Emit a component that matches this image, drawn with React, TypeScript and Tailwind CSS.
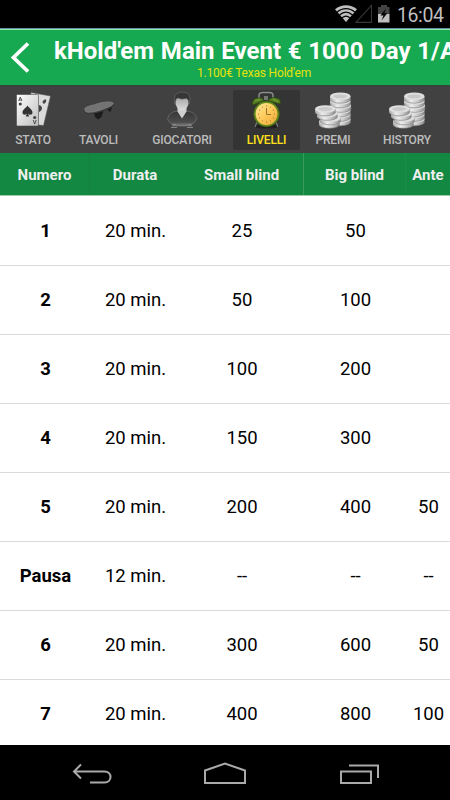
import React from "react";

function StatusIcons() {
  return (
    <svg width="56" height="28" viewBox="334 0 56 28" className="shrink-0">
      <path d="M335 9.2C341.500 3.800 350.500 3.800 357 9.200L346 22Z" fill="#bfbfbf" />
      <g fill="none" stroke="#000" strokeWidth="1.100">
        <path d="M337 12.200C342.500 7.400 349.500 7.400 355 12.200" />
        <path d="M339.500 15C343.500 11.400 348.500 11.400 352.500 15" />
        <path d="M342 17.900C344.500 15.600 347.500 15.600 350 17.900" />
      </g>
      <path d="M356 22.400H371.500V5.500Z" fill="none" stroke="#383838" strokeWidth="1.100" />
      <path d="M378 7H381V5H387V7H389.500V14H378Z" fill="#444" />
      <path d="M378 14H389.500V22.500H378Z" fill="#bfbfbf" />
      <path d="M386 8.500L380.500 15.500H383.500L381.500 20.500L387.300 13.200H384.300Z" fill="#000" />
    </svg>
  );
}

function CardsIcon() {
  return (
    <svg width="40" height="40" viewBox="0 0 40 40">
      <defs>
        <linearGradient id="card" x1="0" y1="0" x2="1" y2="1">
          <stop offset="0" stopColor="#fff" />
          <stop offset="1" stopColor="#bdbdbd" />
        </linearGradient>
      </defs>
      <path d="M18 2.500L37.500 6L30.500 35.500L17 34Z" fill="#dadada" stroke="#555" strokeWidth=".5" />
      <path d="M31 10q3-2 2 2l-2 2q-3-2 0-4M26 15c4 1 4 5 0 7z" fill="#444" />
      <rect x="3.500" y="4.500" width="22" height="31.500" rx="1" fill="url(#card)" stroke="#4b4b4b" strokeWidth=".6" />
      <path d="M14.500 15.500C13 18 9.500 19.500 9.500 22.500C9.500 25 12.500 25.500 14 23.500L12.800 26.500H16.200L15 23.500C16.500 25.500 19.500 25 19.500 22.500C19.500 19.500 16 18 14.500 15.500Z" fill="#333" />
      <path d="M7.300 7L5.700 11M7.300 7L8.900 11M6.300 10H8.400M21.700 34L20.200 30M21.700 34L23.200 30" stroke="#444" strokeWidth=".9" />
      <circle cx="7.300" cy="14" r="1.600" fill="#444" />
      <circle cx="21.700" cy="27.500" r="1.600" fill="#444" />
    </svg>
  );
}

function TableIcon() {
  return (
    <svg width="40" height="40" viewBox="0 0 40 40">
      <path d="M15 23L24.500 20.500L22.500 27L19 29.500L16 27ZM28 18L33.500 15L31.500 22L28.500 20Z" fill="#1b1b1b" />
      <path d="M5 19.500C7 16 12 17 18 14.500C24 12.500 31 11.500 34.500 13C37 15.500 32 18 26 20.500C18 23.500 10 25 7 23.500C5 22.500 4 21 5 19.500Z" fill="#393939" />
      <path d="M5.500 18.800C8 15.500 13 16 18.500 13.700C24 12 31 11 34.200 13C34.500 15.500 28 17.500 23 19.500C16 22 9 23.200 6.500 21.500Z" fill="#737373" stroke="#8d8d8d" strokeWidth=".6" />
    </svg>
  );
}

function PlayerIcon() {
  return (
    <svg width="40" height="40" viewBox="0 0 40 40">
      <defs>
        <linearGradient id="coat" x2="0" y2="1">
          <stop stopColor="#363636" />
          <stop offset=".75" stopColor="#4c4c4c" />
          <stop offset="1" stopColor="#858585" />
        </linearGradient>
        <linearGradient id="face" x2="0" y2="1">
          <stop stopColor="#a5a5a5" />
          <stop offset="1" stopColor="#ddd" />
        </linearGradient>
      </defs>
      <path d="M15.500 21H24.500L29 22Q34 24 34.500 28.500Q34 32 30 34L29.500 36H10.500L10 34Q6 32 5.500 28.500Q6.500 24 11 22Z" fill="url(#coat)" stroke="#777" strokeWidth=".6" />
      <path d="M15.500 17H24.500V21.500L20 28.500L15.500 21.500Z" fill="#cfcfcf" />
      <path d="M13.500 9Q20 5 26.500 9V14Q25 19.500 20 20.500Q15 19.500 13.500 14Z" fill="url(#face)" />
      <path d="M13 14C11 4 15 2 21 2.200C28 2.500 29 7 27 14Q27 10 24.500 8.500Q19 10 15.500 8Q13.500 9 13 14Z" fill="#363636" stroke="#777" strokeWidth=".5" />
      <path d="M11 34.500H14M26 34.500H29M9 37.500H15M25 37.500H31" fill="none" stroke="#858585" strokeWidth="1" />
    </svg>
  );
}

const clockMarks = [0, 1, 2, 3, 4, 5, 6, 7, 8, 9, 10, 11];

function ClockIcon() {
  return (
    <svg width="40" height="40" viewBox="0 0 40 40">
      <defs>
        <linearGradient id="dial" x2="1" y2="1">
          <stop stopColor="#ffeb99" />
          <stop offset=".5" stopColor="#ffca59" />
          <stop offset="1" stopColor="#eba637" />
        </linearGradient>
      </defs>
      <ellipse cx="19.500" cy="36.500" rx="12.500" ry="2" fill="#202020" />
      <path d="M12 8V5.500Q12 2.500 15.500 2.500H22.500Q26 2.500 26 5.500V8" fill="none" stroke="#888c8c" strokeWidth="1.500" />
      <path d="M17 6H21V10H17Z" fill="#747a72" />
      <path d="M10 32L8 37M29 32L31 37" stroke="#777" strokeWidth="1.300" />
      <path d="M5.500 15Q4.500 9 11 8Q15 7 17 10.500ZM21 10.500Q25 6 29 8Q35 9 33 14Z" fill="#547c20" stroke="#284c08" strokeWidth=".6" />
      <path d="M8 11Q10 9 13 10M26 9.500Q29 9.500 31 12" stroke="#89a847" strokeWidth=".9" fill="none" />
      <circle cx="19.500" cy="24" r="12.900" fill="#668c20" stroke="#304f0c" strokeWidth=".6" />
      <circle cx="19.500" cy="24" r="10.900" fill="url(#dial)" />
      <g stroke="#9d7c39" strokeWidth=".9">
        {clockMarks.map((n) => (
          <path key={n} d="M19.500 15.500V16.600" transform={`rotate(${n * 30} 19.500 24)`} />
        ))}
      </g>
      <path d="M19.500 18V24.500H24" fill="none" stroke="#947338" strokeWidth="1" />
    </svg>
  );
}

function Coin({ x, y }: { x: number; y: number }) {
  return (
    <g transform={`translate(${x} ${y})`}>
      <path d="M0 0V3A10.300 3.800 0 0 0 20.600 3V0Z" fill="url(#silver)" />
      <path d="M0 3A10.300 3.800 0 0 0 20.600 3" fill="none" stroke="#7b7b7b" strokeWidth=".6" />
      <ellipse cx="10.300" cy="0" rx="10.300" ry="3.800" fill="#dedede" />
    </g>
  );
}

function CoinsIcon() {
  return (
    <svg width="40" height="40" viewBox="0 0 40 40">
      <defs>
        <linearGradient id="silver">
          <stop stopColor="#a5a5a5" />
          <stop offset=".35" stopColor="#eee" />
          <stop offset=".65" stopColor="#cacaca" />
          <stop offset="1" stopColor="#8b8b8b" />
        </linearGradient>
      </defs>
      <Coin x={17} y={29} />
      <Coin x={17} y={24.5} />
      <Coin x={17} y={20} />
      <Coin x={17.5} y={15.5} />
      <Coin x={17} y={11} />
      <Coin x={17} y={6.3} />
      <ellipse cx="27.300" cy="6.300" rx="7" ry="1.900" fill="#c8c8c8" />
      <Coin x={6} y={31.5} />
      <Coin x={7} y={28} />
      <Coin x={4} y={23.5} />
      <Coin x={2} y={19} />
      <ellipse cx="12.300" cy="19" rx="7" ry="1.900" fill="#c8c8c8" />
    </svg>
  );
}

const tabs = [
  { label: "STATO", width: "w-[66px]", icon: <CardsIcon /> },
  { label: "TAVOLI", width: "w-[65px]", icon: <TableIcon /> },
  { label: "GIOCATORI", width: "w-[102px]", icon: <PlayerIcon /> },
  { label: "LIVELLI", width: "w-[67px]", icon: <ClockIcon />, active: true },
  { label: "PREMI", width: "w-[66px]", icon: <CoinsIcon /> },
  { label: "HISTORY", width: "w-[82px]", icon: <CoinsIcon /> },
];

const levels = [
  ["1", "20 min.", "25", "50", ""],
  ["2", "20 min.", "50", "100", ""],
  ["3", "20 min.", "100", "200", ""],
  ["4", "20 min.", "150", "300", ""],
  ["5", "20 min.", "200", "400", "50"],
  ["Pausa", "12 min.", "--", "--", "--"],
  ["6", "20 min.", "300", "600", "50"],
  ["7", "20 min.", "400", "800", "100"],
];

export default function App() {
  return (
    <div className="flex h-[800px] w-[450px] flex-col overflow-hidden bg-white font-[Roboto,sans-serif]">
      <div className="flex h-7 shrink-0 items-center justify-end bg-black pr-[7px]">
        <StatusIcons />
        <span className="ml-[7px] w-[46px] whitespace-nowrap pt-[3px] text-[19.5px] leading-7 tracking-[-0.4px] text-[#bfbfbf]">16:04</span>
      </div>
      <header className="flex h-[57px] shrink-0 border-t border-[#6692a3] bg-[#16a951]">
        <div className="flex w-full border-t border-[#8ee8a8]">
          <svg width="54" height="54" viewBox="0 30 54 54" className="shrink-0">
            <path d="M28 43.500L13.500 57.500L28 71.500" fill="none" stroke="#fff" strokeWidth="3.800" />
          </svg>
          <div className="min-w-0 flex-1">
            <div className="h-[35px] overflow-hidden whitespace-nowrap pt-[7px] text-[24px] font-bold leading-7 text-white [word-spacing:0.8px]">kHold'em Main Event € 1000 Day 1/A</div>
            <div className="pl-[143px] text-[12px] leading-4 tracking-[-0.2px] whitespace-nowrap text-[#e8e20c]">1.100€ Texas Hold'em</div>
          </div>
        </div>
      </header>
      <nav className="flex h-17 shrink-0 border-t border-[#32463a] bg-[#414141] pt-1">
        {tabs.map((tab) => (
          <div key={tab.label} className={`${tab.width} flex h-[60px] shrink-0 flex-col items-center rounded-xs ${tab.active ? "bg-[#343434] text-[#ffe01b]" : "text-[#bcbcbc]"}`}>
            {tab.icon}
            <span className="pt-[3px] text-[12px] font-medium leading-[14px] tracking-[-0.2px]">{tab.label}</span>
          </div>
        ))}
      </nav>
      <div className="grid h-[43px] shrink-0 grid-cols-[90px_90px_123px_102px_45px] border-b border-[#9fcbad] bg-[#128842] text-center text-[15px] font-bold leading-[44px] text-[#efefef]">
        <span className="h-[42px] border-r border-[#16803f]">Numero</span>
        <span className="h-[42px]">Durata</span>
        <span className="h-[42px]">Small blind</span>
        <span className="h-[42px] border-l border-[#389b5c]">Big blind</span>
        <span className="h-[42px] border-l border-[#178e48]">Ante</span>
      </div>
      <main className="flex h-[549px] shrink-0 flex-col overflow-hidden pt-px">
        {levels.map((level, i) => (
          <div key={i} className="grid h-[69px] shrink-0 grid-cols-[91px_89px_124px_103px_43px] border-b border-[#dadada] text-center text-[18.5px] leading-[68px] text-black">
            {level.map((value, col) => (
              <span key={col} className={col === 0 ? "font-bold" : ""}>{value}</span>
            ))}
          </div>
        ))}
      </main>
      <footer className="h-[55px] shrink-0 bg-black">
        <svg width="450" height="55" viewBox="0 745 450 55" fill="none" stroke="#aaa" strokeWidth="2">
          <path d="M81 764.500L74 771.500L81 778.500M75 771.500H104.500C112.500 771.500 112.500 782.500 104.500 782.500H90" />
          <path d="M205 770.500L225 763.500L245 770.500V783H205Z" />
          <path d="M341 771.500H371V783H341ZM349 765.500H378V778" />
        </svg>
      </footer>
    </div>
  );
}
